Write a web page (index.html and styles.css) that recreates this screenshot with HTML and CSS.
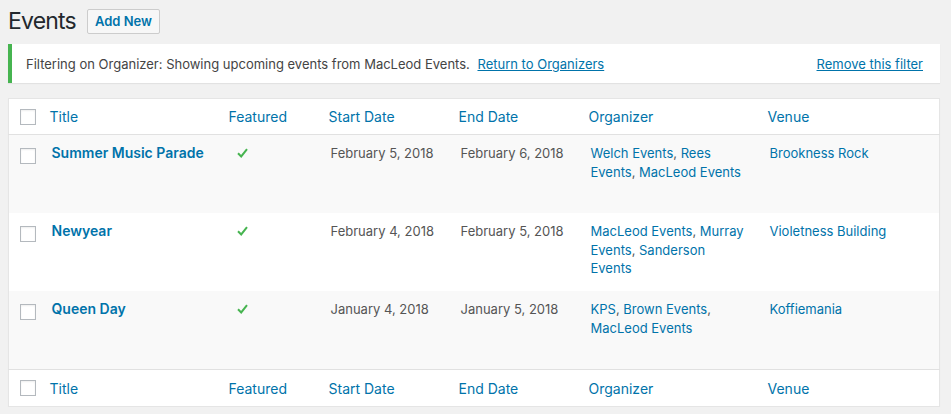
FILE: index.html
```html
<!DOCTYPE html>
<html>
<head>
<meta charset="utf-8">
<link rel="stylesheet" href="styles.css">
</head>
<body>
<div class="wrap">
  <div class="title-bar">
    <h1 class="page-title">Events</h1>
    <a class="add-new" href="#">Add New</a>
  </div>
  <div class="notice">
    <span class="notice-text">Filtering on Organizer: Showing upcoming events from MacLeod Events. <a href="#">Return to Organizers</a></span>
    <a class="notice-remove" href="#">Remove this filter</a>
  </div>
  <table class="list">
    <colgroup>
      <col class="c-cb"><col class="c-title"><col class="c-feat"><col class="c-date"><col class="c-date"><col class="c-org"><col>
    </colgroup>
    <thead>
      <tr>
        <th class="cb"><span class="box"></span></th>
        <th><a href="#">Title</a></th>
        <th><a href="#">Featured</a></th>
        <th><a href="#">Start Date</a></th>
        <th><a href="#">End Date</a></th>
        <th><a href="#">Organizer</a></th>
        <th><a href="#">Venue</a></th>
      </tr>
    </thead>
    <tbody>
      <tr class="alt">
        <td class="cb"><span class="box"></span></td>
        <td><a class="row-title" href="#">Summer Music Parade</a></td>
        <td class="feat"><svg width="11" height="10" viewBox="0 0 11 10"><path d="M1 5.2 L4.2 8.4 L10 1.2" fill="none" stroke="#46b450" stroke-width="2"/></svg></td>
        <td class="date">February 5, 2018</td>
        <td class="date">February 6, 2018</td>
        <td><a href="#">Welch Events</a>, <a href="#">Rees Events</a>, <a href="#">MacLeod Events</a></td>
        <td><a href="#">Brookness Rock</a></td>
      </tr>
      <tr>
        <td class="cb"><span class="box"></span></td>
        <td><a class="row-title" href="#">Newyear</a></td>
        <td class="feat"><svg width="11" height="10" viewBox="0 0 11 10"><path d="M1 5.2 L4.2 8.4 L10 1.2" fill="none" stroke="#46b450" stroke-width="2"/></svg></td>
        <td class="date">February 4, 2018</td>
        <td class="date">February 5, 2018</td>
        <td><a href="#">MacLeod Events</a>, <a href="#">Murray Events</a>, <a href="#">Sanderson Events</a></td>
        <td><a href="#">Violetness Building</a></td>
      </tr>
      <tr class="alt">
        <td class="cb"><span class="box"></span></td>
        <td><a class="row-title" href="#">Queen Day</a></td>
        <td class="feat"><svg width="11" height="10" viewBox="0 0 11 10"><path d="M1 5.2 L4.2 8.4 L10 1.2" fill="none" stroke="#46b450" stroke-width="2"/></svg></td>
        <td class="date">January 4, 2018</td>
        <td class="date">January 5, 2018</td>
        <td><a href="#">KPS</a>, <a href="#">Brown Events</a>, <a href="#">MacLeod Events</a></td>
        <td><a href="#">Koffiemania</a></td>
      </tr>
    </tbody>
    <tfoot>
      <tr>
        <th class="cb"><span class="box"></span></th>
        <th><a href="#">Title</a></th>
        <th><a href="#">Featured</a></th>
        <th><a href="#">Start Date</a></th>
        <th><a href="#">End Date</a></th>
        <th><a href="#">Organizer</a></th>
        <th><a href="#">Venue</a></th>
      </tr>
    </tfoot>
  </table>
</div>
</body>
</html>
```

FILE: styles.css
```css
html, body {
  margin: 0;
  padding: 0;
  background: #f1f1f1;
}
body {
  font-family: Inter, "Liberation Sans", sans-serif;
  font-size: 13px;
  color: #444;
}
a {
  color: #0073aa;
  text-decoration: none;
}
.wrap {
  padding: 0 11px 0 8px;
}
.title-bar {
  display: flex;
  align-items: center;
  height: 42px;
  padding-bottom: 2px;
}
.page-title {
  margin: 0 11px 0 0;
  font-size: 23px;
  font-weight: 400;
  color: #23282d;
  line-height: 29px;
  letter-spacing: -0.8px;
}
.add-new {
  display: inline-block;
  box-sizing: border-box;
  height: 25px;
  padding: 0 7px;
  line-height: 23px;
  border: 1px solid #ccc;
  border-radius: 2px;
  background: #f7f7f7;
  font-weight: 600;
  font-size: 13px;
  color: #0073aa;
}
.notice {
  display: flex;
  justify-content: space-between;
  align-items: center;
  box-sizing: border-box;
  height: 39px;
  background: #fff;
  border-left: 4px solid #46b450;
  box-shadow: 0 1px 1px rgba(0,0,0,0.06);
  padding: 0 17px 0 14px;
  margin-bottom: 15px;
  color: #444;
}
.notice a {
  text-decoration: underline;
  margin-left: 4px;
}
.notice-remove {
  margin-left: 0;
}
.list {
  width: 100%;
  table-layout: fixed;
  border-collapse: collapse;
  border: 1px solid #e5e5e5;
  background: #fff;
  box-shadow: 0 1px 1px rgba(0,0,0,0.04);
}
.c-cb { width: 31px; }
.c-title { width: 179px; }
.c-feat { width: 100px; }
.c-date { width: 130px; }
.c-org { width: 179px; }
.list th {
  text-align: left;
  font-weight: 400;
  font-size: 14px;
  line-height: 19px;
  padding: 8px 10px 8px;
}
.list thead tr {
  border-bottom: 1px solid #e1e1e1;
}
.list tfoot tr {
  border-top: 1px solid #e1e1e1;
}
.list tfoot th {
  padding: 9px 10px 8px;
}
.list td {
  vertical-align: top;
  padding: 9px 10px 0 12px;
  height: 69px;
  line-height: 18.5px;
  color: #555;
}
.list tr.alt td {
  background: #f9f9f9;
}
.list .cb {
  padding: 0 0 0 11px;
  vertical-align: middle;
}
.list td.cb {
  vertical-align: top;
  padding-top: 13px;
  height: 65px;
}
.box {
  display: block;
  width: 14px;
  height: 14px;
  border: 1px solid #b4b9be;
  background: #fff;
  box-shadow: inset 0 1px 2px rgba(0,0,0,0.07);
}
.row-title {
  font-weight: 600;
  font-size: 14px;
}
.list td.feat {
  padding-left: 18px;
  padding-top: 13px;
  height: 65px;
}
.feat svg {
  display: block;
}
.list td.date {
  color: #555;
}
```
